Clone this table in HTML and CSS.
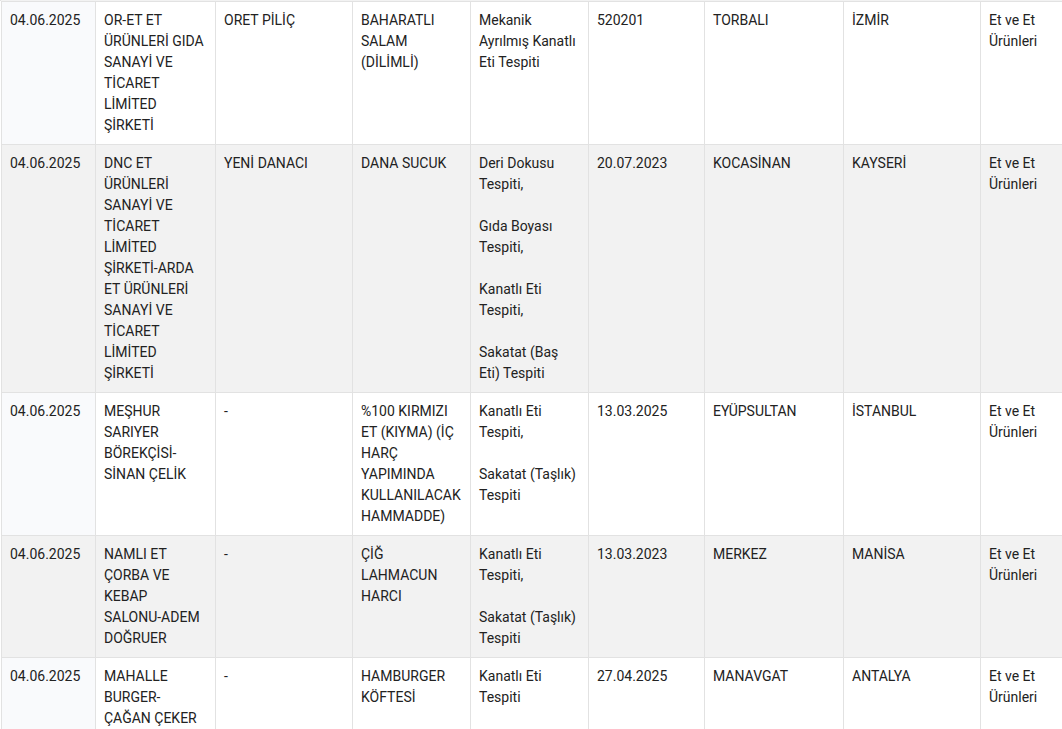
FILE: index.html
```html
<!DOCTYPE html>
<html lang="tr">
<head>
<meta charset="utf-8">
<title>Tablo</title>
<link rel="stylesheet" href="styles.css">
</head>
<body>
<div class="wrap">
  <div class="prev-tail"></div>
  <table class="grid">
    <tbody>
      <tr class="row-white">
        <td class="c1 first">04.06.2025</td>
        <td class="c2">OR-ET ET ÜRÜNLERİ GIDA SANAYİ VE TİCARET LİMİTED ŞİRKETİ</td>
        <td class="c3">ORET PİLİÇ</td>
        <td class="c4">BAHARATLI SALAM (DİLİMLİ)</td>
        <td class="c5">Mekanik Ayrılmış Kanatlı Eti Tespiti</td>
        <td class="c6">520201</td>
        <td class="c7">TORBALI</td>
        <td class="c8">İZMİR</td>
        <td class="c9">Et ve Et Ürünleri</td>
      </tr>
      <tr class="row-gray">
        <td class="first">04.06.2025</td>
        <td>DNC ET ÜRÜNLERİ SANAYİ VE TİCARET LİMİTED ŞİRKETİ-ARDA ET ÜRÜNLERİ SANAYİ VE TİCARET LİMİTED ŞİRKETİ</td>
        <td>YENİ DANACI</td>
        <td>DANA SUCUK</td>
        <td>Deri Dokusu Tespiti,<br><br>Gıda Boyası Tespiti,<br><br>Kanatlı Eti Tespiti,<br><br>Sakatat (Baş Eti) Tespiti</td>
        <td>20.07.2023</td>
        <td>KOCASİNAN</td>
        <td>KAYSERİ</td>
        <td>Et ve Et Ürünleri</td>
      </tr>
      <tr class="row-white">
        <td class="first">04.06.2025</td>
        <td>MEŞHUR SARIYER BÖREKÇİSİ-SİNAN ÇELİK</td>
        <td>-</td>
        <td>%100 KIRMIZI ET (KIYMA) (İÇ HARÇ YAPIMINDA KULLANILACAK HAMMADDE)</td>
        <td>Kanatlı Eti Tespiti,<br><br>Sakatat (Taşlık) Tespiti</td>
        <td>13.03.2025</td>
        <td>EYÜPSULTAN</td>
        <td>İSTANBUL</td>
        <td>Et ve Et Ürünleri</td>
      </tr>
      <tr class="row-gray">
        <td class="first">04.06.2025</td>
        <td>NAMLI ET ÇORBA VE KEBAP SALONU-ADEM DOĞRUER</td>
        <td>-</td>
        <td>ÇİĞ LAHMACUN HARCI</td>
        <td>Kanatlı Eti Tespiti,<br><br>Sakatat (Taşlık) Tespiti</td>
        <td>13.03.2023</td>
        <td>MERKEZ</td>
        <td>MANİSA</td>
        <td>Et ve Et Ürünleri</td>
      </tr>
      <tr class="row-white">
        <td class="first">04.06.2025</td>
        <td>MAHALLE BURGER-ÇAĞAN ÇEKER</td>
        <td>-</td>
        <td>HAMBURGER KÖFTESİ</td>
        <td>Kanatlı Eti Tespiti</td>
        <td>27.04.2025</td>
        <td>MANAVGAT</td>
        <td>ANTALYA</td>
        <td>Et ve Et Ürünleri</td>
      </tr>
    </tbody>
  </table>
</div>
</body>
</html>
```
FILE: styles.css
```css
html, body {
  margin: 0;
  padding: 0;
  background: #ffffff;
  overflow: hidden;
}

.wrap {
  padding-left: 1px;
  width: 1070px;
}

.prev-tail {
  height: 1px;
  background: #f2f2f2;
  border-left: 1px solid #e2e2e2;
  margin-left: -1px;
}

.grid {
  border-collapse: separate;
  border-spacing: 0;
  table-layout: fixed;
  width: 1069px;
  border-left: 1px solid #e2e2e2;
  border-top: 1px solid #e2e2e2;
  font-family: Roboto, "Liberation Sans", sans-serif;
  font-size: 14px;
  line-height: 21px;
  color: #222222;
}

.grid td {
  box-sizing: border-box;
  padding: 8px;
  vertical-align: top;
  text-align: left;
  border-right: 1px solid #e2e2e2;
  border-bottom: 1px solid #e2e2e2;
  word-wrap: break-word;
}

.c1 { width: 94px; }
.c2 { width: 120px; }
.c3 { width: 137px; }
.c4 { width: 118px; }
.c5 { width: 118px; }
.c6 { width: 116px; }
.c7 { width: 139px; }
.c8 { width: 137px; }
.c9 { width: 90px; }

.row-white td { background: #ffffff; }
.row-white td.first { background: #f9fafc; }
.row-gray td { background: #f2f2f2; }
```
